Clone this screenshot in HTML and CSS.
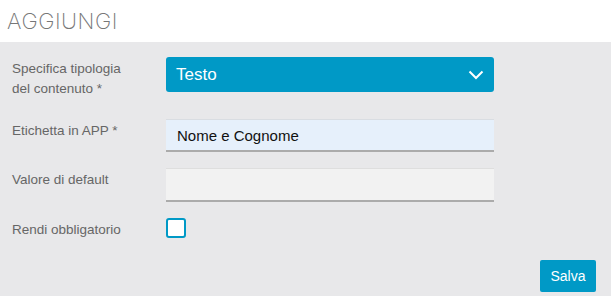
FILE: index.html
```html
<!DOCTYPE html>
<html lang="it">

<head>
    <meta charset="UTF-8" />
    <meta name="viewport" content="width=device-width, initial-scale=1.0" />
    <title>Aggiungi</title>
    <link rel="stylesheet" href="styles.css">
</head>

<body>
    <header class="top">
        <h1>AGGIUNGI</h1>
    </header>

    <main class="panel">
        <form class="form">
            <!-- Tipologia -->
            <div class="row row-first">
                <label class="label">Specifica tipologia<br>del contenuto *</label>
                <div class="select">
                    <span>Testo</span>
                    <svg width="16" height="10" viewBox="0 0 16 10">
                        <polyline points="1.5,1.5 8,8 14.5,1.5" fill="none" stroke="#fff" stroke-width="2" />
                    </svg>
                </div>
            </div>

            <!-- Etichetta -->
            <div class="row">
                <label class="label">Etichetta in APP *</label>
                <div class="field field-filled">Nome e Cognome</div>
            </div>

            <!-- Default -->
            <div class="row">
                <label class="label">Valore di default</label>
                <div class="field field-empty"></div>
            </div>

            <!-- Obbligatorio -->
            <div class="row">
                <label class="label">Rendi obbligatorio</label>
                <span class="check"></span>
            </div>

            <div class="actions">
                <button type="button" class="btn">Salva</button>
            </div>
        </form>
    </main>
</body>

</html>
```

FILE: styles.css
```css
/* Global */
body {
    margin: 0;
    font-family: 'Liberation Sans', Arial, sans-serif;
    background: #e8e8ea;
    color: #666;
}

/* Header */
.top {
    background: #fff;
    height: 42px;
    padding-left: 7px;
}

.top h1 {
    margin: 0;
    font-family: Inter, sans-serif;
    font-weight: 200;
    font-size: 22px;
    line-height: 42px;
    color: #777;
    letter-spacing: 0.5px;
}

/* Form */
.panel {
    padding: 15px 15px 0 12px;
}

.row {
    display: flex;
    align-items: flex-start;
    margin-bottom: 16px;
}

.row-first {
    margin-bottom: 20px;
}

.label {
    width: 154px;
    font-size: 13.5px;
    line-height: 20px;
    padding-top: 2px;
}

.select {
    width: 328px;
    height: 35px;
    box-sizing: border-box;
    background: #0099c6;
    border-radius: 3px;
    color: #fff;
    font-size: 17px;
    display: flex;
    align-items: center;
    justify-content: space-between;
    padding: 0 10px 0 10px;
}

.field {
    width: 328px;
    box-sizing: border-box;
    border-top: 1px solid #d9dde2;
    border-bottom: 2px solid #ababab;
    font-size: 15px;
    color: #111;
    padding-left: 11px;
    display: flex;
    align-items: center;
}

.field-filled {
    height: 33px;
    background: #e6f0fb;
}

.field-empty {
    height: 34px;
    background: #f2f2f2;
    border-top-color: #dedede;
}

.check {
    width: 20px;
    height: 20px;
    box-sizing: border-box;
    border: 2px solid #0099c6;
    border-radius: 3px;
    background: #fff;
}

.actions {
    display: flex;
    justify-content: flex-end;
    margin-top: 20px;
}

.btn {
    width: 56px;
    height: 32px;
    border: none;
    border-radius: 2px;
    background: #0099c6;
    color: #fff;
    font-family: 'Liberation Sans', Arial, sans-serif;
    font-size: 14px;
    padding: 0;
}
```
